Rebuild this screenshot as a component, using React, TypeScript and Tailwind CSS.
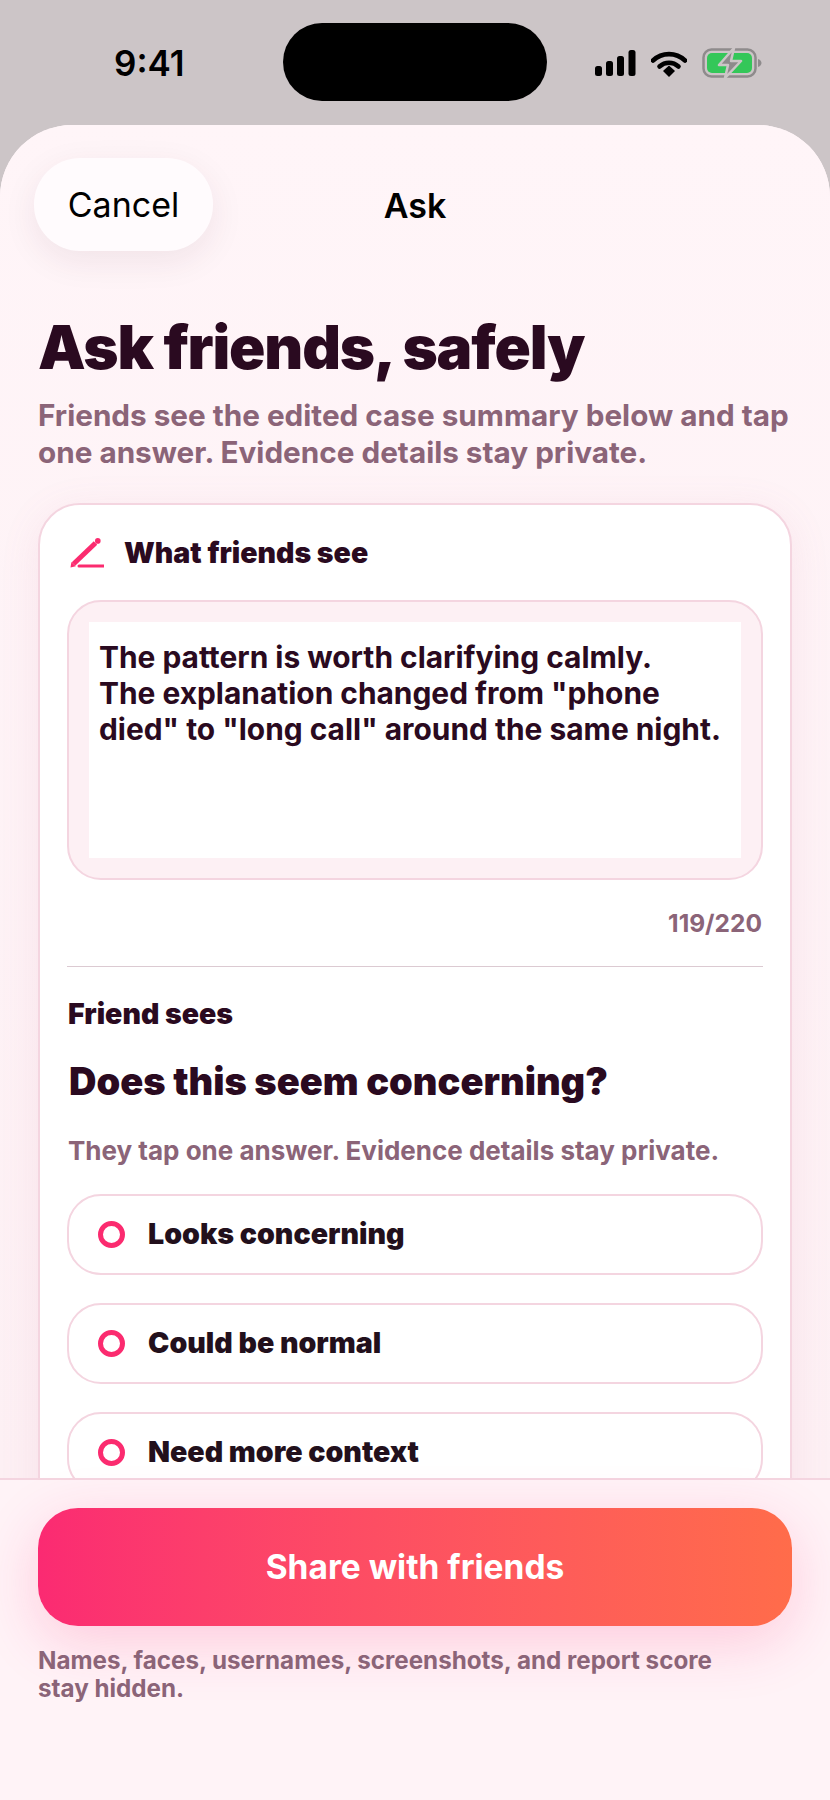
const options = ['Looks concerning', 'Could be normal', 'Need more context'];

function StatusIcons() {
  return (
    <div className="flex items-center">
      <svg width="42" height="26" viewBox="0 0 42 26" className="mr-[14px]">
        <rect x="0" y="16" width="7" height="10" rx="2.5" fill="#000" />
        <rect x="11" y="11" width="7" height="15" rx="2.5" fill="#000" />
        <rect x="22" y="6" width="7" height="20" rx="2.5" fill="#000" />
        <rect x="33.5" y="0" width="7" height="26" rx="2.5" fill="#000" />
      </svg>
      <svg width="36" height="27" viewBox="0 0 36 27" className="mr-[15px]">
        <path d="M2 10.5C11 2 25 2 34 10.5" fill="none" stroke="#000" strokeWidth="4.6" strokeLinecap="round" />
        <path d="M8.5 16.5C14 11.5 22 11.5 27.5 16.5" fill="none" stroke="#000" strokeWidth="4.6" strokeLinecap="round" />
        <path d="M12 21L18 15.5L24 21L18 27Z" fill="#000" />
      </svg>
      <svg width="60" height="30" viewBox="0 0 60 30">
        <rect x="1.5" y="1.5" width="52" height="27" rx="8" fill="none" stroke="#8e8b8c" strokeWidth="2.5" />
        <rect x="5" y="5" width="45" height="20" rx="5" fill="#34c759" />
        <path d="M56 11C58.5 12 59.5 13.5 59.5 15C59.5 16.5 58.5 18 56 19Z" fill="#8e8b8c" />
        <path d="M32 0L17 17H26L23 30L39 13H29Z" fill="#8e8b8c" stroke="#ccc5c7" strokeWidth="2.5" strokeLinejoin="round" />
      </svg>
    </div>
  );
}

function PenIcon() {
  return (
    <svg width="34" height="30" viewBox="0 0 34 30" className="shrink-0">
      <path d="M3.5 26L25.5 5" fill="none" stroke="#fb2b6f" strokeWidth="5" />
      <path d="M0.5 29.5L1.4 24L5.8 28.2Z" fill="#fb2b6f" />
      <circle cx="27.8" cy="2.9" r="2.8" fill="#fb2b6f" />
      <path d="M9 28H33.5" fill="none" stroke="#fb2b6f" strokeWidth="3" strokeLinecap="round" />
    </svg>
  );
}

function OptionRow({ label }: { label: string }) {
  return (
    <div className="flex h-[81px] shrink-0 items-center rounded-[34px] border-2 border-[#f4d5e0] bg-white pl-[29px]">
      <span className="h-[27px] w-[27px] rounded-full border-[5px] border-[#fb2b6f]" />
      <span className="ml-[23px] text-[28.6px] font-black text-[#22101c]">{label}</span>
    </div>
  );
}

export default function App() {
  return (
    <div className="flex h-[1800px] w-[830px] flex-col overflow-hidden bg-[#ccc5c7] font-['Inter',sans-serif]">
      {/* status bar */}
      <div className="flex h-[125px] shrink-0 items-start pl-[114px]">
        <span className="mt-[40px] w-[169px] text-[35px] font-semibold leading-[46px] text-black">9:41</span>
        <div className="mt-[23px] h-[78px] w-[264px] rounded-[39px] bg-black" />
        <div className="ml-[48px] mt-[48px]">
          <StatusIcons />
        </div>
      </div>

      {/* sheet */}
      <div className="flex min-h-0 flex-1 flex-col overflow-hidden rounded-t-[72px] bg-[#fff4f7]">
        <div className="min-h-0 flex-1 overflow-hidden bg-gradient-to-b from-[#fff5f8] to-[#fdf0f4] px-[38px]">
          <div className="relative mt-[33px] flex h-[93px] items-center justify-center">
            <button className="absolute left-[-4px] top-0 flex h-[93px] w-[179px] items-center justify-center rounded-[46px] bg-[#fffbfd] text-[34px] text-black shadow-[0_10px_34px_rgba(80,30,50,0.08)]">
              Cancel
            </button>
            <span className="mt-[2px] text-[34px] font-semibold text-black">Ask</span>
          </div>

          <h1 className="mt-[60px] text-[60px] font-black leading-[72px] tracking-[-1.15px] text-[#2a0a20]">
            Ask friends, safely
          </h1>
          <p className="mt-[14px] text-[29.7px] font-bold leading-[37px] text-[#8b6478]">
            Friends see the edited case summary below and tap one answer. Evidence details stay private.
          </p>

          <div className="mt-[32px] h-[1100px] rounded-[42px] border-2 border-[#f4d5e0] bg-white px-[27px] pt-[27px] shadow-[0_8px_40px_rgba(200,100,140,0.1)]">
            <div className="flex items-center gap-[20px] pl-[3px]">
              <PenIcon />
              <span className="text-[28.5px] font-black text-[#2a0a20]">What friends see</span>
            </div>

            <div className="mt-[25px] rounded-[34px] border-2 border-[#f4d5e0] bg-[#fdf0f4] p-[20px]">
              <div className="h-[236px] bg-white px-[10px] py-[17px] text-[29.9px] font-bold leading-[36px] text-[#2a0a20]">
                The pattern is worth clarifying calmly.
                <br />
                The explanation changed from "phone died" to "long call" around the same night.
              </div>
            </div>

            <p className="mr-[1px] mt-[29px] text-right text-[24.5px] font-bold leading-[28px] text-[#8b6478]">119/220</p>
            <div className="mt-[29px] h-px bg-[#dccad2]" />

            <p className="ml-[1px] mt-[31px] text-[28.5px] font-black leading-[32px] text-[#2a0a20]">Friend sees</p>
            <p className="ml-[2px] mt-[29px] text-[38px] font-black leading-[44px] text-[#2a0a20]">Does this seem concerning?</p>
            <p className="ml-[1px] mt-[32px] text-[26px] font-bold leading-[32px] text-[#8b6478]">
              They tap one answer. Evidence details stay private.
            </p>

            <div className="mt-[27px] flex flex-col gap-[28px]">
              {options.map((option) => (
                <OptionRow key={option} label={option} />
              ))}
            </div>
          </div>
        </div>

        {/* footer */}
        <div className="h-[322px] shrink-0 border-t-2 border-[#f4d5e0] bg-[#fff3f7] px-[38px] pt-[28px]">
          <button className="flex h-[118px] w-full items-center justify-center rounded-[40px] bg-gradient-to-r from-[#fb2a72] to-[#ff6c4a] text-[33.5px] font-bold text-white shadow-[0_16px_60px_rgba(251,42,114,0.2)]">
            Share with friends
          </button>
          <p className="mt-[21px] max-w-[690px] text-[24.2px] font-bold leading-[28px] text-[#8b6478]">
            Names, faces, usernames, screenshots, and report score stay hidden.
          </p>
        </div>
      </div>
    </div>
  );
}
